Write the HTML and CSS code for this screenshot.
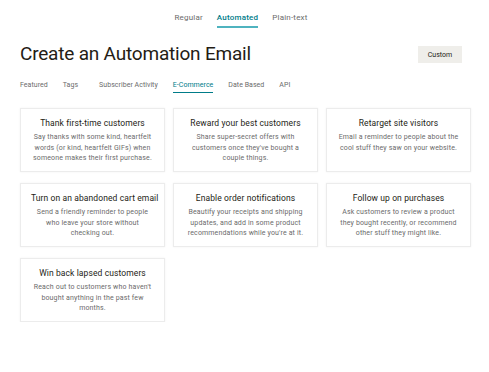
FILE: index.html
```html
<!DOCTYPE html>
<html>
<head>
<meta charset="utf-8">
<link rel="stylesheet" href="styles.css">
</head>
<body>
<div class="page">
  <nav class="top-tabs">
    <span class="top-tab">Regular</span>
    <span class="top-tab active">Automated</span>
    <span class="top-tab">Plain-text</span>
  </nav>
  <header class="header">
    <h1 class="title">Create an Automation Email</h1>
    <button class="custom-btn">Custom</button>
  </header>
  <nav class="sub-tabs">
    <span class="sub-tab">Featured</span>
    <span class="sub-tab tags">Tags</span>
    <span class="sub-tab">Subscriber Activity</span>
    <span class="sub-tab active">E-Commerce</span>
    <span class="sub-tab">Date Based</span>
    <span class="sub-tab">API</span>
  </nav>
  <div class="grid">
    <div class="card">
      <h2 class="card-title">Thank first-time customers</h2>
      <p class="card-desc">Say thanks with some kind, heartfelt words (or kind, heartfelt GIFs) when someone makes their first purchase.</p>
    </div>
    <div class="card">
      <h2 class="card-title">Reward your best customers</h2>
      <p class="card-desc">Share super-secret offers with customers once they've bought a couple things.</p>
    </div>
    <div class="card">
      <h2 class="card-title">Retarget site visitors</h2>
      <p class="card-desc">Email a reminder to people about the cool stuff they saw on your website.</p>
    </div>
    <div class="card">
      <h2 class="card-title">Turn on an abandoned cart email</h2>
      <p class="card-desc">Send a friendly reminder to people who leave your store without checking out.</p>
    </div>
    <div class="card">
      <h2 class="card-title">Enable order notifications</h2>
      <p class="card-desc">Beautify your receipts and shipping updates, and add in some product recommendations while you're at it.</p>
    </div>
    <div class="card">
      <h2 class="card-title">Follow up on purchases</h2>
      <p class="card-desc">Ask customers to review a product they bought recently, or recommend other stuff they might like.</p>
    </div>
    <div class="card">
      <h2 class="card-title">Win back lapsed customers</h2>
      <p class="card-desc">Reach out to customers who haven't bought anything in the past few months.</p>
    </div>
  </div>
</div>
</body>
</html>
```

FILE: styles.css
```css
* { box-sizing: border-box; }
html, body { margin: 0; padding: 0; background: #fff; }
body {
  font-family: Roboto, "Liberation Sans", sans-serif;
  color: #241c15;
}
.page {
  padding: 10px 19px 0 20px;
}
.top-tabs {
  display: flex;
  justify-content: center;
  gap: 14px;
  padding-right: 8px;
}
.top-tab {
  font-size: 8px;
  line-height: 12px;
  padding: 2px 0 2px;
  color: #6b6b6b;
  letter-spacing: 0.2px;
  border-bottom: 2px solid transparent;
}
.top-tab.active {
  color: #007c89;
  font-weight: 500;
  border-bottom-color: #4fb3bf;
}
.header {
  display: flex;
  justify-content: space-between;
  align-items: flex-start;
  margin-top: 13px;
}
.title {
  margin: 0;
  font-size: 19px;
  line-height: 26px;
  font-weight: 400;
  letter-spacing: -0.2px;
}
.custom-btn {
  margin-top: 5px;
  margin-right: 8px;
  width: 44px;
  height: 17px;
  border: none;
  background: #efeeea;
  font-family: inherit;
  font-size: 7px;
  color: #241c15;
  padding: 0;
}
.sub-tabs {
  display: flex;
  gap: 15px;
  margin-top: 13px;
}
.sub-tab {
  font-size: 7px;
  line-height: 10px;
  padding-bottom: 2px;
  color: #6b6b6b;
  letter-spacing: 0.04px;
  border-bottom: 1px solid transparent;
}
.sub-tab.tags { margin-right: 6px; }
.sub-tab.active {
  color: #007c89;
  border-bottom-color: #007c89;
}
.grid {
  display: grid;
  grid-template-columns: repeat(3, 145px);
  grid-auto-rows: 64px;
  column-gap: 8px;
  row-gap: 11px;
  margin-top: 15px;
}
.card {
  border: 1px solid #ececec;
  box-shadow: 0 0 2px rgba(0,0,0,0.06);
  padding: 8px 10px 7px;
  text-align: center;
}
.card-title {
  margin: 0 0 2px;
  font-size: 8.5px;
  line-height: 13px;
  font-weight: 400;
  letter-spacing: 0.1px;
  color: #241c15;
  white-space: nowrap;
}
.card-desc {
  margin: 0;
  font-size: 7px;
  line-height: 10.5px;
  letter-spacing: 0.15px;
  color: #6b6b6b;
}
```
